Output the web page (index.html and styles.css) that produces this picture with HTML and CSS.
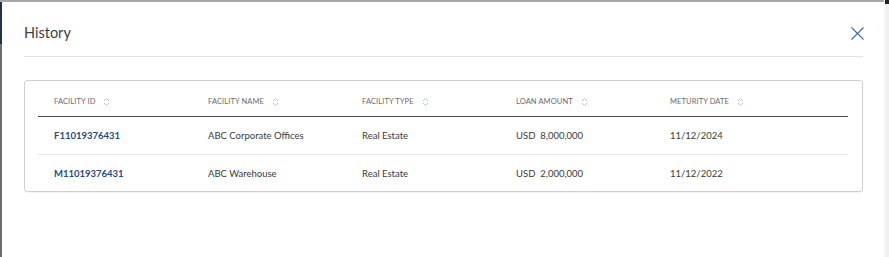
FILE: index.html
```html
<!DOCTYPE html>
<html>
<head>
<meta charset="utf-8">
<link rel="stylesheet" href="styles.css">
</head>
<body>
<div class="screen">
  <div class="left-edge"></div>
  <div class="modal">
    <div class="modal-header">
      <h1 class="title">History</h1>
      <button class="close" aria-label="Close">
        <svg width="13" height="13" viewBox="0 0 13 13"><path d="M0.5 0.5 L12.5 12.5 M12.5 0.5 L0.5 12.5" stroke="#3f6fa6" stroke-width="1.2" fill="none"/></svg>
      </button>
    </div>
    <div class="card">
      <div class="row head">
        <div class="cell">FACILITY ID <span class="sort"><svg width="7" height="10" viewBox="0 0 7 10"><path d="M1 4 L3.5 1.5 L6 4 M1 6 L3.5 8.5 L6 6" stroke="#b3c3d8" stroke-width="1" fill="none"/></svg></span></div>
        <div class="cell">FACILITY NAME <span class="sort"><svg width="7" height="10" viewBox="0 0 7 10"><path d="M1 4 L3.5 1.5 L6 4 M1 6 L3.5 8.5 L6 6" stroke="#b3c3d8" stroke-width="1" fill="none"/></svg></span></div>
        <div class="cell">FACILITY TYPE <span class="sort"><svg width="7" height="10" viewBox="0 0 7 10"><path d="M1 4 L3.5 1.5 L6 4 M1 6 L3.5 8.5 L6 6" stroke="#b3c3d8" stroke-width="1" fill="none"/></svg></span></div>
        <div class="cell">LOAN AMOUNT <span class="sort"><svg width="7" height="10" viewBox="0 0 7 10"><path d="M1 4 L3.5 1.5 L6 4 M1 6 L3.5 8.5 L6 6" stroke="#b3c3d8" stroke-width="1" fill="none"/></svg></span></div>
        <div class="cell">METURITY DATE <span class="sort"><svg width="7" height="10" viewBox="0 0 7 10"><path d="M1 4 L3.5 1.5 L6 4 M1 6 L3.5 8.5 L6 6" stroke="#b3c3d8" stroke-width="1" fill="none"/></svg></span></div>
      </div>
      <div class="row body">
        <div class="cell"><a class="link">F11019376431</a></div>
        <div class="cell">ABC Corporate Offices</div>
        <div class="cell">Real Estate</div>
        <div class="cell">USD&nbsp; 8,000,000</div>
        <div class="cell">11/12/2024</div>
      </div>
      <div class="row body last">
        <div class="cell"><a class="link">M11019376431</a></div>
        <div class="cell">ABC Warehouse</div>
        <div class="cell">Real Estate</div>
        <div class="cell">USD&nbsp; 2,000,000</div>
        <div class="cell">11/12/2022</div>
      </div>
    </div>
  </div>
  <div class="right-edge"></div>
</div>
</body>
</html>
```

FILE: styles.css
```css
html, body {
  margin: 0;
  padding: 0;
  background: #ffffff;
}
body {
  font-family: "Lato", "Liberation Sans", sans-serif;
  color: #333333;
}
.screen {
  display: flex;
  width: 889px;
  height: 257px;
  overflow: hidden;
}
.left-edge {
  width: 2px;
  flex: none;
  background: linear-gradient(to bottom, #a8a8a8 0, #a8a8a8 2px, #1d3352 2px, #1d3352 44px, #6e6e6e 44px, #6e6e6e 100%);
}
.modal {
  flex: 1;
  border-top: 2px solid #a8a8a8;
  padding: 0 21px 0 22px;
  background: #ffffff;
}
.right-edge {
  width: 4px;
  flex: none;
  background: linear-gradient(to bottom, #222 0, #222 4px, #f1f1f1 4px);
  border-left: 1px solid #fafafa;
}
.modal-header {
  display: flex;
  align-items: center;
  justify-content: space-between;
  padding: 20px 0 12px;
  border-bottom: 1px solid #e3e3e3;
}
.title {
  margin: 0;
  font-size: 14.5px;
  font-weight: 400;
  line-height: 22px;
  color: #3e3e3e;
}
.close {
  border: 0;
  background: none;
  padding: 0;
  margin-right: -1px;
  width: 13px;
  height: 13px;
  display: flex;
}
.card {
  margin-top: 23px;
  border: 1px solid #cfcfcf;
  border-radius: 3px;
  padding: 0 14px 0 13px;
  box-shadow: 0 1px 1px rgba(0,0,0,0.05);
}
.row {
  display: grid;
  grid-template-columns: 154px 154px 154px 154px 1fr;
  padding-left: 16px;
  align-items: center;
}
.row.head {
  padding-top: 15px;
  padding-bottom: 8px;
  border-bottom: 1px solid #4d4d4d;
  font-size: 7.5px;
  line-height: 12px;
  color: #6a6a6a;
  letter-spacing: 0.1px;
}
.head .cell {
  display: flex;
  align-items: center;
}
.sort {
  display: inline-flex;
  margin-left: 8px;
}
.row.body {
  height: 37px;
  font-size: 9.5px;
  color: #3a3a3a;
  border-bottom: 1px solid #e6e6e6;
}
.row.body.last {
  height: 36px;
  border-bottom: 0;
}
.link {
  color: #1f4a7e;
  font-weight: 700;
  text-decoration: none;
}
```
